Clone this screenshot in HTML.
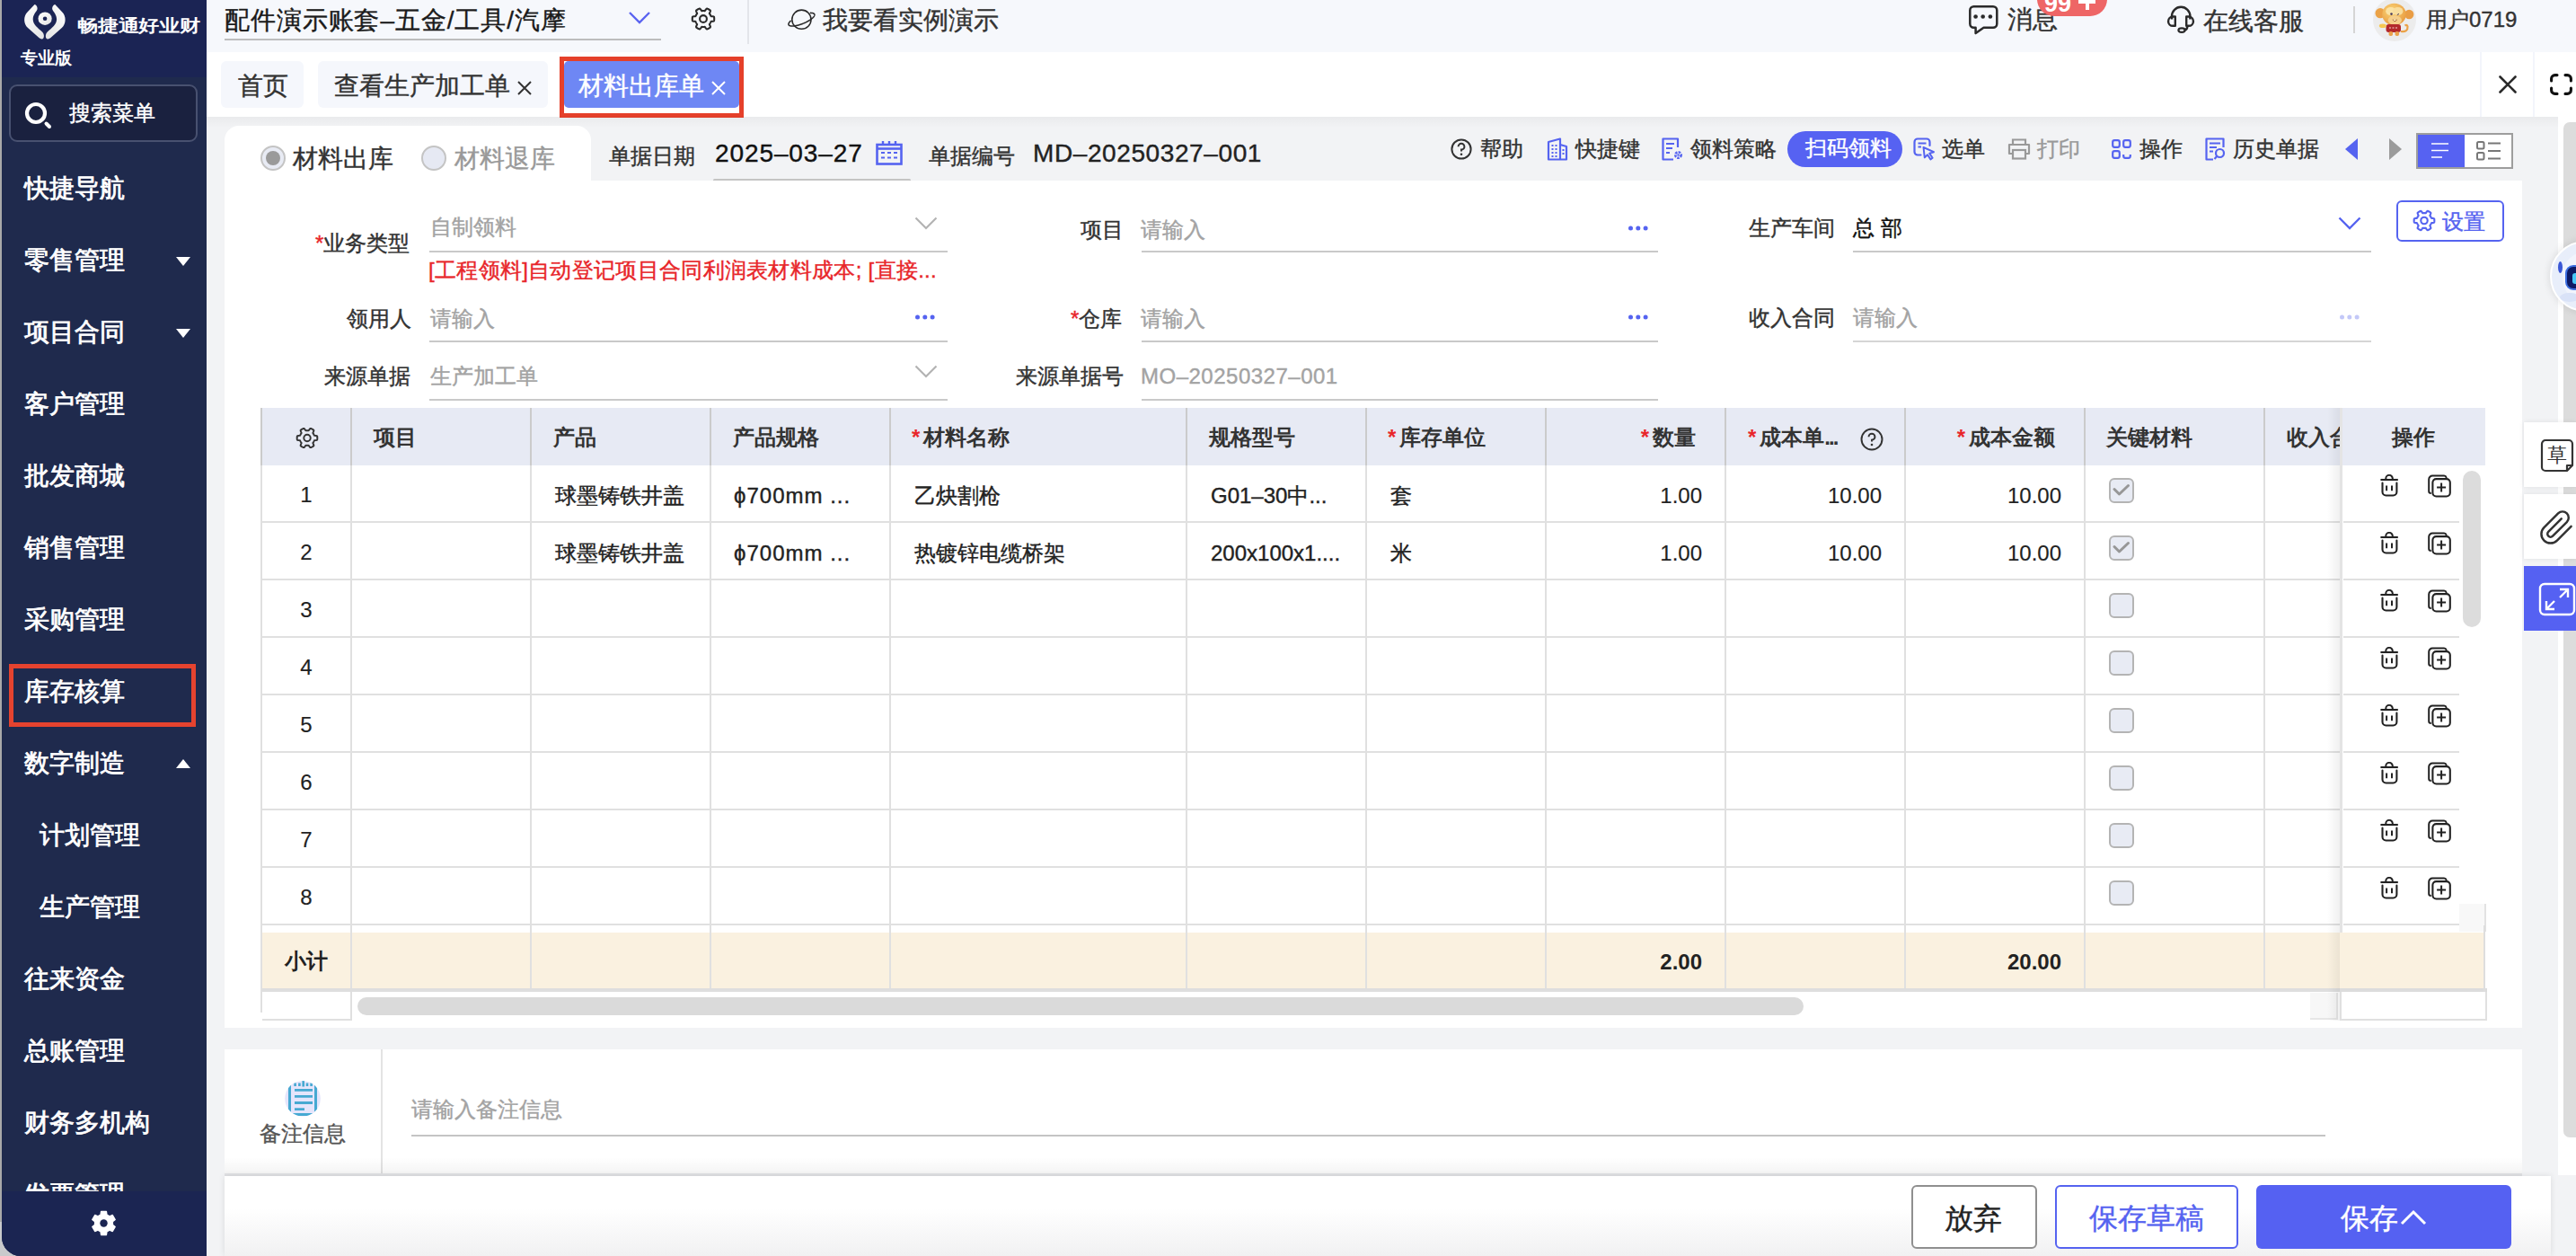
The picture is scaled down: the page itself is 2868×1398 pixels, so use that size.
<!DOCTYPE html>
<html><head><meta charset="utf-8">
<style>
*{box-sizing:border-box;margin:0;padding:0}
html,body{width:2868px;height:1398px;overflow:hidden;background:#f2f3f5;font-family:"Liberation Sans",sans-serif;color:#333}
.t{-webkit-text-stroke-width:0.4px}
.mi{-webkit-text-stroke-width:0.8px}
.a{position:absolute}
.t{position:absolute;white-space:nowrap;line-height:1}
/* sidebar */
#side{position:absolute;left:2px;top:0;width:228px;height:1398px;background:#1f2a4d;border-bottom-left-radius:21px;overflow:hidden}
#logo{position:absolute;left:0;top:0;width:228px;height:86px;background:#1b2454}
.mi{position:absolute;left:25px;color:#fff;font-size:28px;line-height:1;white-space:nowrap}
.tri{position:absolute;left:194px;width:0;height:0;border-left:8px solid transparent;border-right:8px solid transparent}
#topbar{position:absolute;left:230px;top:0;width:2638px;height:58px;background:#f6f8fc}
#tabrow{position:absolute;left:230px;top:58px;width:2638px;height:72px;background:#fff}
.tab{position:absolute;top:68px;height:52px;background:#f5f7fc;border-radius:6px;font-size:28px;color:#333}
</style></head>
<body>
<div class="a" style="left:0;top:0;width:2px;height:1398px;background:#a9a9a9"></div><div class="a" style="left:0;top:1360px;width:40px;height:38px;background:#c9cacc"></div>
<div id="side">
  <div id="logo"></div>
  <div class="t" style="left:84px;top:19px;color:#fff;font-size:23px;font-weight:bold;-webkit-text-stroke-width:0;transform:scaleY(0.82);transform-origin:0 0;letter-spacing:-0.2px">畅捷通好业财</div>
  <div class="t" style="left:21px;top:55px;color:#fff;font-size:19px;font-weight:bold;-webkit-text-stroke-width:0">专业版</div>
  <div class="a" style="left:8px;top:94px;width:210px;height:64px;border:2px solid #485170;border-radius:9px;background:#1a213f"></div>
  <div class="t" style="left:75px;top:114px;color:#fff;font-size:24px">搜索菜单</div>
  <div class="mi" style="top:196px">快捷导航</div>
  <div class="mi" style="top:276px">零售管理</div>
  <div class="mi" style="top:356px">项目合同</div>
  <div class="mi" style="top:436px">客户管理</div>
  <div class="mi" style="top:516px">批发商城</div>
  <div class="mi" style="top:596px">销售管理</div>
  <div class="mi" style="top:676px">采购管理</div>
  <div class="mi" style="top:756px">库存核算</div>
  <div class="mi" style="top:836px">数字制造</div>
  <div class="mi" style="top:916px;left:42px">计划管理</div>
  <div class="mi" style="top:996px;left:42px">生产管理</div>
  <div class="mi" style="top:1076px">往来资金</div>
  <div class="mi" style="top:1156px">总账管理</div>
  <div class="mi" style="top:1236px">财务多机构</div>
  <div class="mi" style="top:1316px">发票管理</div>
  <div class="tri" style="top:286px;border-top:10px solid #fff"></div>
  <div class="tri" style="top:366px;border-top:10px solid #fff"></div>
  <div class="tri" style="top:845px;border-bottom:10px solid #fff"></div>
  <div class="a" style="left:8px;top:739px;width:208px;height:70px;border:5px solid #e5432f"></div>
  <div class="a" style="left:0;top:1326px;width:228px;height:73px;background:#1b2552"></div>
</div>

<div id="topbar">
  <div class="t" style="left:20px;top:9px;font-size:28px;color:#1a1a1a;letter-spacing:0.9px">配件演示账套–五金/工具/汽摩</div>
  <div class="a" style="left:20px;top:43px;width:486px;height:2px;background:#bdbdbd"></div>
  <svg class="a" style="left:469px;top:12px" width="26" height="16" viewBox="0 0 26 16"><path d="M2 2 L13 13 L24 2" fill="none" stroke="#5a63f0" stroke-width="2.4"/></svg>
  <svg class="a" style="left:539px;top:8px" width="28" height="26" viewBox="0 0 28 26"><path d="M14.00 4.00 L14.31 4.01 L14.63 4.02 L14.94 4.05 L15.25 4.09 L15.56 4.14 L15.94 3.89 L16.46 3.14 L17.04 2.39 L17.67 1.70 L18.17 1.54 L18.57 1.69 L18.96 1.85 L19.35 2.03 L19.73 2.23 L20.10 2.43 L20.47 2.65 L20.82 2.89 L21.17 3.13 L21.51 3.39 L21.84 3.65 L21.95 4.17 L21.67 5.06 L21.31 5.94 L20.92 6.77 L20.89 7.21 L21.09 7.46 L21.28 7.71 L21.46 7.97 L21.63 8.23 L21.79 8.50 L21.95 8.77 L22.09 9.05 L22.22 9.34 L22.34 9.63 L22.46 9.92 L22.86 10.12 L23.77 10.20 L24.71 10.33 L25.63 10.53 L26.01 10.88 L26.08 11.30 L26.13 11.72 L26.17 12.15 L26.19 12.57 L26.20 13.00 L26.19 13.43 L26.17 13.85 L26.13 14.28 L26.08 14.70 L26.01 15.12 L25.63 15.47 L24.71 15.67 L23.77 15.80 L22.86 15.88 L22.46 16.08 L22.34 16.37 L22.22 16.66 L22.09 16.95 L21.95 17.23 L21.79 17.50 L21.63 17.77 L21.46 18.03 L21.28 18.29 L21.09 18.54 L20.89 18.79 L20.92 19.23 L21.31 20.06 L21.67 20.94 L21.95 21.83 L21.84 22.35 L21.51 22.61 L21.17 22.87 L20.82 23.11 L20.47 23.35 L20.10 23.57 L19.73 23.77 L19.35 23.97 L18.96 24.15 L18.57 24.31 L18.17 24.46 L17.67 24.30 L17.04 23.61 L16.46 22.86 L15.94 22.11 L15.56 21.86 L15.25 21.91 L14.94 21.95 L14.63 21.98 L14.31 21.99 L14.00 22.00 L13.69 21.99 L13.37 21.98 L13.06 21.95 L12.75 21.91 L12.44 21.86 L12.06 22.11 L11.54 22.86 L10.96 23.61 L10.33 24.30 L9.83 24.46 L9.43 24.31 L9.04 24.15 L8.65 23.97 L8.27 23.77 L7.90 23.57 L7.53 23.35 L7.18 23.11 L6.83 22.87 L6.49 22.61 L6.16 22.35 L6.05 21.83 L6.33 20.94 L6.69 20.06 L7.08 19.23 L7.11 18.79 L6.91 18.54 L6.72 18.29 L6.54 18.03 L6.37 17.77 L6.21 17.50 L6.05 17.23 L5.91 16.95 L5.78 16.66 L5.66 16.37 L5.54 16.08 L5.14 15.88 L4.23 15.80 L3.29 15.67 L2.37 15.47 L1.99 15.12 L1.92 14.70 L1.87 14.28 L1.83 13.85 L1.81 13.43 L1.80 13.00 L1.81 12.57 L1.83 12.15 L1.87 11.72 L1.92 11.30 L1.99 10.88 L2.37 10.53 L3.29 10.33 L4.23 10.20 L5.14 10.12 L5.54 9.92 L5.66 9.63 L5.78 9.34 L5.91 9.05 L6.05 8.77 L6.21 8.50 L6.37 8.23 L6.54 7.97 L6.72 7.71 L6.91 7.46 L7.11 7.21 L7.08 6.77 L6.69 5.94 L6.33 5.06 L6.05 4.17 L6.16 3.65 L6.49 3.39 L6.83 3.13 L7.18 2.89 L7.53 2.65 L7.90 2.43 L8.27 2.23 L8.65 2.03 L9.04 1.85 L9.43 1.69 L9.83 1.54 L10.33 1.70 L10.96 2.39 L11.54 3.14 L12.06 3.89 L12.44 4.14 L12.75 4.09 L13.06 4.05 L13.37 4.02 L13.69 4.01 Z" fill="none" stroke="#2a2a2a" stroke-width="2.1" stroke-linejoin="round"/><circle cx="14" cy="13" r="3.9" fill="none" stroke="#2a2a2a" stroke-width="2.1"/></svg>
  <div class="a" style="left:602px;top:0;width:2px;height:49px;background:#e3e5ea"></div>
  <svg class="a" style="left:647px;top:9px" width="34" height="26" viewBox="0 0 34 26"><circle cx="15.4" cy="12.7" r="10.6" fill="none" stroke="#2a2a2a" stroke-width="1.55"/><path d="M29.77 6.89 L29.85 7.13 L29.88 7.39 L29.88 7.66 L29.83 7.95 L29.75 8.24 L29.62 8.55 L29.46 8.87 L29.26 9.21 L29.02 9.55 L28.75 9.90 L28.43 10.25 L28.08 10.62 L27.70 10.99 L27.28 11.36 L26.83 11.74 L26.35 12.12 L25.84 12.50 L25.30 12.89 L24.74 13.27 L24.14 13.65 L23.53 14.03 L22.89 14.40 L22.23 14.77 L21.55 15.14 L20.86 15.50 L20.15 15.85 L19.42 16.19 L18.69 16.52 L17.95 16.84 L17.20 17.15 L16.44 17.45 L15.69 17.73 L14.93 18.00 L14.17 18.26 L13.42 18.50 L12.67 18.73 L11.93 18.94 L11.20 19.13 L10.48 19.30 L9.77 19.46 L9.08 19.59 L8.41 19.71 L7.75 19.81 L7.12 19.89 L6.51 19.95 L5.92 19.99 L5.36 20.01 L4.83 20.01 L4.33 19.99 L3.85 19.95 L3.41 19.89 L3.00 19.81 L2.63 19.72 L2.29 19.60 L1.98 19.46 L1.72 19.30 L1.49 19.13 L1.30 18.94 L1.14 18.73 L1.03 18.51 M1.03 18.51 L0.95 18.27 L0.92 18.01 L0.92 17.74 L0.97 17.45 L1.05 17.16 L1.18 16.85 L1.34 16.53 L1.54 16.19 L1.78 15.85 L2.05 15.50 L2.37 15.15 L2.72 14.78 L3.10 14.41 M25.44 5.39 L25.97 5.39 L26.47 5.41 L26.95 5.45 L27.39 5.51 L27.80 5.59 L28.17 5.68 L28.51 5.80 L28.82 5.94 L29.08 6.10 L29.31 6.27 L29.50 6.46 L29.66 6.67 L29.77 6.89" fill="none" stroke="#2a2a2a" stroke-width="1.55" stroke-linecap="round"/></svg>
  <div class="t" style="left:686px;top:9px;font-size:28px;color:#333">我要看实例演示</div>

  <svg class="a" style="left:1960px;top:4px" width="36" height="36" viewBox="0 0 36 36"><path d="M9.6 26.8 H7.5 A4.3 4.3 0 0 1 3.3 22.5 V7.5 A4.3 4.3 0 0 1 7.5 3.2 H29 A4.3 4.3 0 0 1 33.3 7.5 V22.5 A4.3 4.3 0 0 1 29 26.8 H18.5 L9.6 33 Z" fill="none" stroke="#2a2a2a" stroke-width="2.5" stroke-linejoin="round"/><circle cx="9.6" cy="14.5" r="2.3" fill="#2a2a2a"/><circle cx="17.7" cy="14.5" r="2.3" fill="#2a2a2a"/><circle cx="25.9" cy="14.5" r="2.3" fill="#2a2a2a"/></svg>
  <div class="t" style="left:2005px;top:8px;font-size:28px;color:#333">消息</div>
  <div class="a" style="left:2038px;top:-20px;width:78px;height:38px;background:#ee6666;border-radius:19px"></div>
  <div class="t" style="left:2046px;top:-9px;font-size:27px;color:#fff;font-weight:bold;-webkit-text-stroke-width:0">99</div><div class="a" style="left:2084px;top:0;width:19px;height:3.5px;background:#fff"></div><div class="a" style="left:2092px;top:-6px;width:3.5px;height:17px;background:#fff"></div>
  <svg class="a" style="left:2180px;top:4px" width="36" height="36" viewBox="0 0 36 36"><path d="M8 17.5 V14 A10.2 10.2 0 0 1 28.4 14 V17.5" fill="none" stroke="#2a2a2a" stroke-width="2.4"/><path d="M11.8 14.5 H9.2 A5.1 5.1 0 0 0 9.2 24.8 H11.8 Z" fill="none" stroke="#2a2a2a" stroke-width="2.4" stroke-linejoin="round"/><path d="M24.2 14.5 H26.8 A5.1 5.1 0 0 1 26.8 24.8 H24.2 Z" fill="none" stroke="#2a2a2a" stroke-width="2.4" stroke-linejoin="round"/><path d="M25.5 25 Q25 29.5 21.5 29.5" fill="none" stroke="#2a2a2a" stroke-width="2.4"/><ellipse cx="19" cy="29.6" rx="3.6" ry="2.3" fill="none" stroke="#2a2a2a" stroke-width="2.2"/></svg>
  <div class="t" style="left:2223px;top:10px;font-size:28px;color:#333">在线客服</div>
  <div class="a" style="left:2390px;top:7px;width:2px;height:30px;background:#d5d5d5"></div>
  <svg class="a" style="left:2412px;top:-2px" width="48" height="48" viewBox="0 0 48 48"><defs><radialGradient id="hg" cx="0.4" cy="0.35" r="0.7"><stop offset="0" stop-color="#fbd77a"/><stop offset="1" stop-color="#e89a3e"/></radialGradient></defs><circle cx="24" cy="24" r="24" fill="#ececec"/><circle cx="8.1" cy="16.7" r="5.6" fill="#eba247"/><circle cx="40.2" cy="18" r="5.2" fill="#e99d45"/><path d="M31 37 Q39 38 38.5 31.5 Q38 29 35.5 30.5" fill="none" stroke="#eba247" stroke-width="2.2"/><ellipse cx="23.5" cy="18" rx="13.3" ry="12.2" fill="url(#hg)"/><ellipse cx="19.8" cy="14.5" rx="5.6" ry="4.6" fill="#fbe3a4"/><ellipse cx="27.8" cy="14.5" rx="5.6" ry="4.6" fill="#f9dd9c"/><ellipse cx="24.3" cy="24.5" rx="7.6" ry="5.2" fill="#f5cf8c"/><circle cx="20.5" cy="17.6" r="1.3" fill="#4a3a5a"/><path d="M26.8 18.6 L29 17.4" stroke="#4a3a5a" stroke-width="1"/><path d="M21.5 23.8 Q24.3 28 27.2 23.8 Z" fill="#9b4f22"/><rect x="22.9" y="23.6" width="2.6" height="1.4" fill="#fff3c8"/><rect x="14.5" y="29" width="16.5" height="9" rx="3" fill="#b3282b"/><ellipse cx="10.8" cy="30.8" rx="4" ry="2.3" fill="#f6c852"/><rect x="17.5" y="37" width="4.6" height="5" rx="2" fill="#eba04a"/><rect x="24.5" y="37" width="4.6" height="5" rx="2" fill="#eba04a"/><path d="M18 33 H20 M21.5 33 H23.5 M25 33 H27" stroke="#f3d3d3" stroke-width="1.2"/></svg>
  <div class="t" style="left:2471px;top:10px;font-size:24px;color:#333">用户0719</div>
</div>
<div id="tabrow">
  <div class="tab" style="left:16px;top:10px;width:92px"><span class="t" style="left:19px;top:14px">首页</span></div>
  <div class="tab" style="left:124px;top:10px;width:256px"><span class="t" style="left:18px;top:14px">查看生产加工单</span>
    <svg class="a" style="left:221px;top:21px" width="18" height="18" viewBox="0 0 18 18"><path d="M2 2 L16 16 M16 2 L2 16" stroke="#333" stroke-width="2"/></svg></div>
  <div class="a" style="left:393px;top:5px;width:205px;height:68px;border:5px solid #e5402a"></div>
  <div class="a" style="left:398px;top:10px;width:195px;height:52px;background:#6e87f4;border-radius:5px"></div>
  <span class="t" style="left:414px;top:24px;font-size:28px;color:#fff">材料出库单</span>
  <svg class="a" style="left:561px;top:31px" width="18" height="18" viewBox="0 0 18 18"><path d="M2 2 L16 16 M16 2 L2 16" stroke="#fff" stroke-width="2"/></svg>
  <div class="a" style="left:2531px;top:0;width:2px;height:72px;background:#f3f5fb"></div>
  <div class="a" style="left:2590px;top:0;width:2px;height:72px;background:#f3f5fb"></div>
  <svg class="a" style="left:2552px;top:26px" width="20" height="20" viewBox="0 0 20 20"><path d="M1.5 1.5 L18.5 18.5 M18.5 1.5 L1.5 18.5" stroke="#2a2a2a" stroke-width="2.6" stroke-linecap="round"/></svg>
  <svg class="a" style="left:2609px;top:24px" width="25" height="24" viewBox="0 0 25 24"><path d="M1.6 8 V5.6 A4 4 0 0 1 5.6 1.6 H8 M17 1.6 H19.4 A4 4 0 0 1 23.4 5.6 V8 M23.4 16 V18.4 A4 4 0 0 1 19.4 22.4 H17 M8 22.4 H5.6 A4 4 0 0 1 1.6 18.4 V16" fill="none" stroke="#111" stroke-width="3.1" stroke-linecap="round"/></svg>
</div>


<!-- content -->
<div class="a" style="left:230px;top:130px;width:2618px;height:12px;background:linear-gradient(to bottom,rgba(0,0,0,0.035),rgba(0,0,0,0))"></div>
<div class="a" style="left:250px;top:140px;width:408px;height:70px;background:#fff;border-radius:16px 16px 0 0"></div>
<div class="a" style="left:290px;top:162px;width:28px;height:28px;border-radius:50%;border:2px solid #c4c4c4;background:#e8ebf4"></div>
<div class="a" style="left:296px;top:168px;width:16px;height:16px;border-radius:50%;background:#9a9a9a"></div>
<div class="t" style="left:326px;top:163px;font-size:28px;color:#333">材料出库</div>
<div class="a" style="left:469px;top:162px;width:28px;height:28px;border-radius:50%;border:2px solid #c4c4c4;background:#e6e9f3"></div>
<div class="t" style="left:506px;top:163px;font-size:28px;color:#999">材料退库</div>
<div class="t" style="left:678px;top:162px;font-size:24px;color:#333">单据日期</div>
<div class="t" style="left:796px;top:157px;font-size:28px;color:#111;letter-spacing:0.9px">2025–03–27</div>
<svg class="a" style="left:975px;top:156px" width="30" height="28" viewBox="0 0 30 28"><rect x="1.5" y="5" width="27" height="21.5" fill="none" stroke="#5563f0" stroke-width="2.6"/><path d="M1.5 9.5 H28.5" stroke="#5563f0" stroke-width="2.6"/><path d="M8 1 V6 M22 1 V6 M15 1 V6" stroke="#5563f0" stroke-width="2.4"/><path d="M6 14 H10 M13 14 H17 M20 14 H24 M6 19.5 H10 M13 19.5 H17 M20 19.5 H24" stroke="#5563f0" stroke-width="2"/></svg>
<div class="a" style="left:794px;top:199px;width:220px;height:3px;background:#c4c4c4;border-radius:2px"></div>
<div class="t" style="left:1034px;top:162px;font-size:24px;color:#333">单据编号</div>
<div class="t" style="left:1150px;top:157px;font-size:28px;color:#222;letter-spacing:0.6px">MD–20250327–001</div>

<!-- toolbar -->
<svg class="a" style="left:1615px;top:154px" width="24" height="24" viewBox="0 0 24 24"><circle cx="12" cy="12" r="10.6" fill="none" stroke="#333" stroke-width="2"/><path d="M8.6 9.3 A3.4 3.4 0 1 1 12 12.6 V14.6" fill="none" stroke="#333" stroke-width="2"/><circle cx="12" cy="17.8" r="1.3" fill="#333"/></svg>
<div class="t" style="left:1648px;top:154px;font-size:24px;color:#333">帮助</div>
<svg class="a" style="left:1722px;top:153px" width="24" height="26" viewBox="0 0 24 26"><path d="M2 5 L15 1.5 V24.5 H2 Z M15 8 L22 10 V24.5 H15" fill="none" stroke="#5563f0" stroke-width="2.2" stroke-linejoin="round"/><path d="M5.5 9 H7.5 M9.5 9 H11.5 M5.5 13 H7.5 M9.5 13 H11.5 M5.5 17 H7.5 M9.5 17 H11.5 M5.5 21 H7.5 M9.5 21 H11.5 M17.5 14 H19.5 M17.5 18 H19.5" stroke="#5563f0" stroke-width="2"/></svg>
<div class="t" style="left:1754px;top:154px;font-size:24px;color:#333">快捷键</div>
<svg class="a" style="left:1849px;top:153px" width="26" height="26" viewBox="0 0 26 26"><path d="M14 24.5 H2.5 V1.5 H19 V11" fill="none" stroke="#5563f0" stroke-width="2.2" stroke-linejoin="round"/><path d="M6 7 H15 M6 12 H13 M6 17 H10" stroke="#5563f0" stroke-width="2"/><circle cx="19.5" cy="19.5" r="3.2" fill="none" stroke="#5563f0" stroke-width="2.6" stroke-dasharray="2.5 1.2"/><circle cx="19.5" cy="19.5" r="1.2" fill="#5563f0"/></svg>
<div class="t" style="left:1882px;top:154px;font-size:24px;color:#333">领料策略</div>
<div class="a" style="left:1990px;top:146px;width:128px;height:40px;border-radius:20px;background:#5662f2"></div>
<div class="t" style="left:2010px;top:153px;font-size:24px;color:#fff">扫码领料</div>
<svg class="a" style="left:2129px;top:153px" width="26" height="26" viewBox="0 0 26 26"><path d="M9.5 19.5 H6 A3.5 3.5 0 0 1 2.5 16 V5 A3.5 3.5 0 0 1 6 1.5 H16 A3.5 3.5 0 0 1 19.5 5 V9" fill="none" stroke="#5563f0" stroke-width="2.2" stroke-linecap="round"/><path d="M6.5 6.5 H15.5 M6.5 10.5 H10" stroke="#5563f0" stroke-width="2"/><path d="M12.5 11 L24 16.2 L19.2 17.6 L22.6 22.8 L20.4 24.4 L17 19.2 L13.8 22.4 Z" fill="none" stroke="#5563f0" stroke-width="2" stroke-linejoin="round"/></svg>
<div class="t" style="left:2162px;top:154px;font-size:24px;color:#333">选单</div>
<svg class="a" style="left:2235px;top:154px" width="26" height="24" viewBox="0 0 26 24"><path d="M6 7 V1.5 H20 V7" fill="none" stroke="#999" stroke-width="2.2"/><path d="M6 17 H2 V7 H24 V17 H20" fill="none" stroke="#999" stroke-width="2.2" stroke-linejoin="round"/><rect x="6" y="13" width="14" height="9.5" fill="none" stroke="#999" stroke-width="2.2"/></svg>
<div class="t" style="left:2268px;top:154px;font-size:24px;color:#999">打印</div>
<svg class="a" style="left:2351px;top:155px" width="22" height="22" viewBox="0 0 22 22"><rect x="1.2" y="1.2" width="7.6" height="7.6" rx="2" fill="none" stroke="#5563f0" stroke-width="2.2"/><rect x="13.2" y="1.2" width="7.6" height="7.6" rx="2" fill="none" stroke="#5563f0" stroke-width="2.2"/><rect x="1.2" y="13.2" width="7.6" height="7.6" rx="2" fill="none" stroke="#5563f0" stroke-width="2.2"/><path d="M13.2 17 V18.8 A2 2 0 0 0 15.2 20.8 H18.8 A2 2 0 0 0 20.8 18.8 V17" fill="none" stroke="#5563f0" stroke-width="2.2"/></svg>
<div class="t" style="left:2382px;top:154px;font-size:24px;color:#333">操作</div>
<svg class="a" style="left:2455px;top:153px" width="24" height="26" viewBox="0 0 24 26"><path d="M9 24.5 H1.5 V1.5 H20.5 V11" fill="none" stroke="#5563f0" stroke-width="2.2" stroke-linejoin="round"/><path d="M5 6.5 H17 M5 11 H13 M5 15.5 H9" stroke="#5563f0" stroke-width="2"/><circle cx="16.5" cy="17.5" r="4.5" fill="none" stroke="#5563f0" stroke-width="2.2"/><path d="M13.3 20.8 L10.5 24" stroke="#5563f0" stroke-width="2.2"/></svg>
<div class="t" style="left:2486px;top:154px;font-size:24px;color:#333">历史单据</div>
<svg class="a" style="left:2611px;top:154px" width="15" height="24" viewBox="0 0 15 24"><path d="M14 0 V24 L0 12 Z" fill="#5563f0"/></svg>
<svg class="a" style="left:2659px;top:154px" width="15" height="24" viewBox="0 0 15 24"><path d="M1 0 V24 L15 12 Z" fill="#9b9b9b"/></svg>
<div class="a" style="left:2690px;top:148px;width:108px;height:40px;border:2px solid #9d9d9d;background:#fff"></div>
<div class="a" style="left:2692px;top:150px;width:52px;height:36px;background:#5662f2"></div>
<svg class="a" style="left:2707px;top:158px" width="20" height="20" viewBox="0 0 20 20"><path d="M0 2 H19 M0 9.5 H19 M0 17 H12" stroke="#fff" stroke-width="1.7"/></svg>
<svg class="a" style="left:2757px;top:157px" width="28" height="22" viewBox="0 0 28 22"><rect x="1" y="1" width="7.5" height="7.5" rx="1.5" fill="none" stroke="#777" stroke-width="2"/><rect x="1" y="13" width="7.5" height="7.5" rx="1.5" fill="none" stroke="#777" stroke-width="2"/><path d="M13 2.5 H27 M13 11 H27 M13 19.5 H27" stroke="#777" stroke-width="2"/></svg>

<!-- card -->
<div class="a" style="left:250px;top:201px;width:2558px;height:943px;background:#fff"></div>

<!-- form -->
<div class="t" style="left:351px;top:259px;font-size:24px;color:#333"><span style="color:#e8262a">*</span>业务类型</div>
<div class="t" style="left:479px;top:241px;font-size:24px;color:#a3a3a3">自制领料</div>
<svg class="a" style="left:1018px;top:241px" width="26" height="16" viewBox="0 0 26 16"><path d="M1.5 1.5 L13 13 L24.5 1.5" fill="none" stroke="#b3b3b3" stroke-width="2.2"/></svg>
<div class="a" style="left:478px;top:279px;width:577px;height:2px;background:#c9c9c9"></div>
<div class="t" style="left:477px;top:289px;font-size:24px;color:#e8262a;letter-spacing:0.3px">[工程领料]自动登记项目合同利润表材料成本; [直接...</div>

<div class="t" style="left:1203px;top:244px;font-size:24px;color:#333">项目</div>
<div class="t" style="left:1270px;top:244px;font-size:24px;color:#a3a3a3">请输入</div>
<svg class="a" style="left:1812px;top:250px" width="24" height="8" viewBox="0 0 24 8"><circle cx="3.5" cy="4" r="2.5" fill="#5563f0"/><circle cx="11.8" cy="4" r="2.5" fill="#5563f0"/><circle cx="20.1" cy="4" r="2.5" fill="#5563f0"/></svg>
<div class="a" style="left:1271px;top:279px;width:575px;height:2px;background:#c9c9c9"></div>

<div class="t" style="left:1947px;top:242px;font-size:24px;color:#333">生产车间</div>
<div class="t" style="left:2063px;top:242px;font-size:24px;color:#111">总 部</div>
<svg class="a" style="left:2603px;top:241px" width="26" height="16" viewBox="0 0 26 16"><path d="M1.5 1.5 L13 13 L24.5 1.5" fill="none" stroke="#5563f0" stroke-width="2.4"/></svg>
<div class="a" style="left:2063px;top:279px;width:577px;height:2px;background:#c9c9c9"></div>
<div class="a" style="left:2668px;top:223px;width:120px;height:46px;border:2px solid #5563f0;border-radius:6px;background:#fff"></div>
<svg class="a" style="left:2686px;top:233px" width="26" height="25" viewBox="0 0 28 26"><path d="M14.00 4.00 L14.31 4.01 L14.63 4.02 L14.94 4.05 L15.25 4.09 L15.56 4.14 L15.94 3.89 L16.46 3.14 L17.04 2.39 L17.67 1.70 L18.17 1.54 L18.57 1.69 L18.96 1.85 L19.35 2.03 L19.73 2.23 L20.10 2.43 L20.47 2.65 L20.82 2.89 L21.17 3.13 L21.51 3.39 L21.84 3.65 L21.95 4.17 L21.67 5.06 L21.31 5.94 L20.92 6.77 L20.89 7.21 L21.09 7.46 L21.28 7.71 L21.46 7.97 L21.63 8.23 L21.79 8.50 L21.95 8.77 L22.09 9.05 L22.22 9.34 L22.34 9.63 L22.46 9.92 L22.86 10.12 L23.77 10.20 L24.71 10.33 L25.63 10.53 L26.01 10.88 L26.08 11.30 L26.13 11.72 L26.17 12.15 L26.19 12.57 L26.20 13.00 L26.19 13.43 L26.17 13.85 L26.13 14.28 L26.08 14.70 L26.01 15.12 L25.63 15.47 L24.71 15.67 L23.77 15.80 L22.86 15.88 L22.46 16.08 L22.34 16.37 L22.22 16.66 L22.09 16.95 L21.95 17.23 L21.79 17.50 L21.63 17.77 L21.46 18.03 L21.28 18.29 L21.09 18.54 L20.89 18.79 L20.92 19.23 L21.31 20.06 L21.67 20.94 L21.95 21.83 L21.84 22.35 L21.51 22.61 L21.17 22.87 L20.82 23.11 L20.47 23.35 L20.10 23.57 L19.73 23.77 L19.35 23.97 L18.96 24.15 L18.57 24.31 L18.17 24.46 L17.67 24.30 L17.04 23.61 L16.46 22.86 L15.94 22.11 L15.56 21.86 L15.25 21.91 L14.94 21.95 L14.63 21.98 L14.31 21.99 L14.00 22.00 L13.69 21.99 L13.37 21.98 L13.06 21.95 L12.75 21.91 L12.44 21.86 L12.06 22.11 L11.54 22.86 L10.96 23.61 L10.33 24.30 L9.83 24.46 L9.43 24.31 L9.04 24.15 L8.65 23.97 L8.27 23.77 L7.90 23.57 L7.53 23.35 L7.18 23.11 L6.83 22.87 L6.49 22.61 L6.16 22.35 L6.05 21.83 L6.33 20.94 L6.69 20.06 L7.08 19.23 L7.11 18.79 L6.91 18.54 L6.72 18.29 L6.54 18.03 L6.37 17.77 L6.21 17.50 L6.05 17.23 L5.91 16.95 L5.78 16.66 L5.66 16.37 L5.54 16.08 L5.14 15.88 L4.23 15.80 L3.29 15.67 L2.37 15.47 L1.99 15.12 L1.92 14.70 L1.87 14.28 L1.83 13.85 L1.81 13.43 L1.80 13.00 L1.81 12.57 L1.83 12.15 L1.87 11.72 L1.92 11.30 L1.99 10.88 L2.37 10.53 L3.29 10.33 L4.23 10.20 L5.14 10.12 L5.54 9.92 L5.66 9.63 L5.78 9.34 L5.91 9.05 L6.05 8.77 L6.21 8.50 L6.37 8.23 L6.54 7.97 L6.72 7.71 L6.91 7.46 L7.11 7.21 L7.08 6.77 L6.69 5.94 L6.33 5.06 L6.05 4.17 L6.16 3.65 L6.49 3.39 L6.83 3.13 L7.18 2.89 L7.53 2.65 L7.90 2.43 L8.27 2.23 L8.65 2.03 L9.04 1.85 L9.43 1.69 L9.83 1.54 L10.33 1.70 L10.96 2.39 L11.54 3.14 L12.06 3.89 L12.44 4.14 L12.75 4.09 L13.06 4.05 L13.37 4.02 L13.69 4.01 Z" fill="none" stroke="#5563f0" stroke-width="2.3" stroke-linejoin="round"/><circle cx="14" cy="13" r="4" fill="none" stroke="#5563f0" stroke-width="2.3"/></svg>
<div class="t" style="left:2719px;top:235px;font-size:24px;color:#5563f0">设置</div>

<div class="t" style="left:386px;top:343px;font-size:24px;color:#333">领用人</div>
<div class="t" style="left:479px;top:343px;font-size:24px;color:#a3a3a3">请输入</div>
<svg class="a" style="left:1018px;top:349px" width="24" height="8" viewBox="0 0 24 8"><circle cx="3.5" cy="4" r="2.5" fill="#5563f0"/><circle cx="11.8" cy="4" r="2.5" fill="#5563f0"/><circle cx="20.1" cy="4" r="2.5" fill="#5563f0"/></svg>
<div class="a" style="left:478px;top:379px;width:577px;height:2px;background:#c9c9c9"></div>

<div class="t" style="left:1192px;top:343px;font-size:24px;color:#333"><span style="color:#e8262a">*</span>仓库</div>
<div class="t" style="left:1270px;top:343px;font-size:24px;color:#a3a3a3">请输入</div>
<svg class="a" style="left:1812px;top:349px" width="24" height="8" viewBox="0 0 24 8"><circle cx="3.5" cy="4" r="2.5" fill="#5563f0"/><circle cx="11.8" cy="4" r="2.5" fill="#5563f0"/><circle cx="20.1" cy="4" r="2.5" fill="#5563f0"/></svg>
<div class="a" style="left:1271px;top:379px;width:575px;height:2px;background:#c9c9c9"></div>

<div class="t" style="left:1947px;top:342px;font-size:24px;color:#333">收入合同</div>
<div class="t" style="left:2063px;top:342px;font-size:24px;color:#a3a3a3">请输入</div>
<svg class="a" style="left:2604px;top:349px" width="24" height="8" viewBox="0 0 24 8"><circle cx="3.5" cy="4" r="2.5" fill="#c3c8f8"/><circle cx="11.8" cy="4" r="2.5" fill="#c3c8f8"/><circle cx="20.1" cy="4" r="2.5" fill="#c3c8f8"/></svg>
<div class="a" style="left:2063px;top:379px;width:577px;height:2px;background:#d5d5d5"></div>

<div class="t" style="left:361px;top:407px;font-size:24px;color:#333">来源单据</div>
<div class="t" style="left:479px;top:407px;font-size:24px;color:#a3a3a3">生产加工单</div>
<svg class="a" style="left:1018px;top:406px" width="26" height="16" viewBox="0 0 26 16"><path d="M1.5 1.5 L13 13 L24.5 1.5" fill="none" stroke="#b3b3b3" stroke-width="2.2"/></svg>
<div class="a" style="left:478px;top:444px;width:577px;height:2px;background:#c9c9c9"></div>
<div class="t" style="left:1131px;top:407px;font-size:24px;color:#333">来源单据号</div>
<div class="t" style="left:1270px;top:407px;font-size:24px;color:#a3a3a3;letter-spacing:0.5px">MO–20250327–001</div>
<div class="a" style="left:1271px;top:444px;width:575px;height:2px;background:#c9c9c9"></div>
<!--TABLE-->
<div class="a" style="left:290px;top:454px;width:2315px;height:64px;background:#e7eaf4"></div>
<div class="a" style="left:292px;top:580px;width:2313px;height:2px;background:#e0e0e0"></div>
<div class="a" style="left:292px;top:644px;width:2313px;height:2px;background:#e0e0e0"></div>
<div class="a" style="left:292px;top:708px;width:2313px;height:2px;background:#e0e0e0"></div>
<div class="a" style="left:292px;top:772px;width:2313px;height:2px;background:#e0e0e0"></div>
<div class="a" style="left:292px;top:836px;width:2313px;height:2px;background:#e0e0e0"></div>
<div class="a" style="left:292px;top:900px;width:2313px;height:2px;background:#e0e0e0"></div>
<div class="a" style="left:292px;top:964px;width:2313px;height:2px;background:#e0e0e0"></div>
<div class="a" style="left:292px;top:1028px;width:2313px;height:2px;background:#e0e0e0"></div>
<div class="a" style="left:292px;top:1038px;width:2313px;height:62px;background:#faf1e0"></div>
<div class="a" style="left:290px;top:1100px;width:2315px;height:4px;background:#dedede"></div>
<div class="a" style="left:290px;top:454px;width:2px;height:64px;background:#cbcbcb"></div>
<div class="a" style="left:290px;top:518px;width:2px;height:609px;background:#e0e0e0"></div>
<div class="a" style="left:390px;top:454px;width:2px;height:64px;background:#cbcbcb"></div>
<div class="a" style="left:390px;top:518px;width:2px;height:582px;background:#e0e0e0"></div>
<div class="a" style="left:590px;top:454px;width:2px;height:64px;background:#cbcbcb"></div>
<div class="a" style="left:590px;top:518px;width:2px;height:582px;background:#e0e0e0"></div>
<div class="a" style="left:790px;top:454px;width:2px;height:64px;background:#cbcbcb"></div>
<div class="a" style="left:790px;top:518px;width:2px;height:582px;background:#e0e0e0"></div>
<div class="a" style="left:990px;top:454px;width:2px;height:64px;background:#cbcbcb"></div>
<div class="a" style="left:990px;top:518px;width:2px;height:582px;background:#e0e0e0"></div>
<div class="a" style="left:1320px;top:454px;width:2px;height:64px;background:#cbcbcb"></div>
<div class="a" style="left:1320px;top:518px;width:2px;height:582px;background:#e0e0e0"></div>
<div class="a" style="left:1520px;top:454px;width:2px;height:64px;background:#cbcbcb"></div>
<div class="a" style="left:1520px;top:518px;width:2px;height:582px;background:#e0e0e0"></div>
<div class="a" style="left:1720px;top:454px;width:2px;height:64px;background:#cbcbcb"></div>
<div class="a" style="left:1720px;top:518px;width:2px;height:582px;background:#e0e0e0"></div>
<div class="a" style="left:1920px;top:454px;width:2px;height:64px;background:#cbcbcb"></div>
<div class="a" style="left:1920px;top:518px;width:2px;height:582px;background:#e0e0e0"></div>
<div class="a" style="left:2120px;top:454px;width:2px;height:64px;background:#cbcbcb"></div>
<div class="a" style="left:2120px;top:518px;width:2px;height:582px;background:#e0e0e0"></div>
<div class="a" style="left:2320px;top:454px;width:2px;height:64px;background:#cbcbcb"></div>
<div class="a" style="left:2320px;top:518px;width:2px;height:582px;background:#e0e0e0"></div>
<div class="a" style="left:2520px;top:454px;width:2px;height:64px;background:#cbcbcb"></div>
<div class="a" style="left:2520px;top:518px;width:2px;height:582px;background:#e0e0e0"></div>
<div class="a" style="left:390px;top:1104px;width:2px;height:32px;background:#e0e0e0"></div>
<div class="a" style="left:292px;top:1134px;width:100px;height:2px;background:#e0e0e0"></div>
<div class="a" style="left:398px;top:1110px;width:1610px;height:20px;border-radius:10px;background:#dadada"></div>
<div class="a" style="left:2572px;top:1105px;width:31px;height:30px;background:#f7f7f7;border-right:2px solid #e6e6e6;border-bottom:2px solid #e6e6e6"></div>
<svg class="a" style="left:329px;top:475px" width="26" height="25" viewBox="0 0 28 26"><path d="M14.00 4.00 L14.31 4.01 L14.63 4.02 L14.94 4.05 L15.25 4.09 L15.56 4.14 L15.94 3.89 L16.46 3.14 L17.04 2.39 L17.67 1.70 L18.17 1.54 L18.57 1.69 L18.96 1.85 L19.35 2.03 L19.73 2.23 L20.10 2.43 L20.47 2.65 L20.82 2.89 L21.17 3.13 L21.51 3.39 L21.84 3.65 L21.95 4.17 L21.67 5.06 L21.31 5.94 L20.92 6.77 L20.89 7.21 L21.09 7.46 L21.28 7.71 L21.46 7.97 L21.63 8.23 L21.79 8.50 L21.95 8.77 L22.09 9.05 L22.22 9.34 L22.34 9.63 L22.46 9.92 L22.86 10.12 L23.77 10.20 L24.71 10.33 L25.63 10.53 L26.01 10.88 L26.08 11.30 L26.13 11.72 L26.17 12.15 L26.19 12.57 L26.20 13.00 L26.19 13.43 L26.17 13.85 L26.13 14.28 L26.08 14.70 L26.01 15.12 L25.63 15.47 L24.71 15.67 L23.77 15.80 L22.86 15.88 L22.46 16.08 L22.34 16.37 L22.22 16.66 L22.09 16.95 L21.95 17.23 L21.79 17.50 L21.63 17.77 L21.46 18.03 L21.28 18.29 L21.09 18.54 L20.89 18.79 L20.92 19.23 L21.31 20.06 L21.67 20.94 L21.95 21.83 L21.84 22.35 L21.51 22.61 L21.17 22.87 L20.82 23.11 L20.47 23.35 L20.10 23.57 L19.73 23.77 L19.35 23.97 L18.96 24.15 L18.57 24.31 L18.17 24.46 L17.67 24.30 L17.04 23.61 L16.46 22.86 L15.94 22.11 L15.56 21.86 L15.25 21.91 L14.94 21.95 L14.63 21.98 L14.31 21.99 L14.00 22.00 L13.69 21.99 L13.37 21.98 L13.06 21.95 L12.75 21.91 L12.44 21.86 L12.06 22.11 L11.54 22.86 L10.96 23.61 L10.33 24.30 L9.83 24.46 L9.43 24.31 L9.04 24.15 L8.65 23.97 L8.27 23.77 L7.90 23.57 L7.53 23.35 L7.18 23.11 L6.83 22.87 L6.49 22.61 L6.16 22.35 L6.05 21.83 L6.33 20.94 L6.69 20.06 L7.08 19.23 L7.11 18.79 L6.91 18.54 L6.72 18.29 L6.54 18.03 L6.37 17.77 L6.21 17.50 L6.05 17.23 L5.91 16.95 L5.78 16.66 L5.66 16.37 L5.54 16.08 L5.14 15.88 L4.23 15.80 L3.29 15.67 L2.37 15.47 L1.99 15.12 L1.92 14.70 L1.87 14.28 L1.83 13.85 L1.81 13.43 L1.80 13.00 L1.81 12.57 L1.83 12.15 L1.87 11.72 L1.92 11.30 L1.99 10.88 L2.37 10.53 L3.29 10.33 L4.23 10.20 L5.14 10.12 L5.54 9.92 L5.66 9.63 L5.78 9.34 L5.91 9.05 L6.05 8.77 L6.21 8.50 L6.37 8.23 L6.54 7.97 L6.72 7.71 L6.91 7.46 L7.11 7.21 L7.08 6.77 L6.69 5.94 L6.33 5.06 L6.05 4.17 L6.16 3.65 L6.49 3.39 L6.83 3.13 L7.18 2.89 L7.53 2.65 L7.90 2.43 L8.27 2.23 L8.65 2.03 L9.04 1.85 L9.43 1.69 L9.83 1.54 L10.33 1.70 L10.96 2.39 L11.54 3.14 L12.06 3.89 L12.44 4.14 L12.75 4.09 L13.06 4.05 L13.37 4.02 L13.69 4.01 Z" fill="none" stroke="#333" stroke-width="2.1" stroke-linejoin="round"/><circle cx="14" cy="13" r="4" fill="none" stroke="#333" stroke-width="2.1"/></svg>
<div class="t" style="left:416px;top:475px;font-size:24px;color:#333;font-weight:bold;-webkit-text-stroke-width:0;">项目</div>
<div class="t" style="left:616px;top:475px;font-size:24px;color:#333;font-weight:bold;-webkit-text-stroke-width:0;">产品</div>
<div class="t" style="left:816px;top:475px;font-size:24px;color:#333;font-weight:bold;-webkit-text-stroke-width:0;">产品规格</div>
<div class="t" style="left:1015px;top:475px;font-size:24px;color:#333;font-weight:bold;-webkit-text-stroke-width:0;"><span style="color:#e8262a;margin-right:4px">*</span>材料名称</div>
<div class="t" style="left:1346px;top:475px;font-size:24px;color:#333;font-weight:bold;-webkit-text-stroke-width:0;">规格型号</div>
<div class="t" style="left:1545px;top:475px;font-size:24px;color:#333;font-weight:bold;-webkit-text-stroke-width:0;"><span style="color:#e8262a;margin-right:4px">*</span>库存单位</div>
<div class="t" style="right:980px;top:475px;font-size:24px;color:#333;font-weight:bold;-webkit-text-stroke-width:0;"><span style="color:#e8262a;margin-right:4px">*</span>数量</div>
<div class="t" style="left:1946px;top:475px;font-size:24px;color:#333;font-weight:bold;-webkit-text-stroke-width:0;"><span style="color:#e8262a;margin-right:4px">*</span>成本单<span style="letter-spacing:-2px">...</span></div>
<svg class="a" style="left:2071px;top:476px" width="26" height="26" viewBox="0 0 24 24"><circle cx="12" cy="12" r="10.6" fill="none" stroke="#333" stroke-width="1.8"/><path d="M8.8 9.4 A3.2 3.2 0 1 1 12 12.6 V14.4" fill="none" stroke="#333" stroke-width="1.8"/><circle cx="12" cy="17.6" r="1.2" fill="#333"/></svg>
<div class="t" style="right:580px;top:475px;font-size:24px;color:#333;font-weight:bold;-webkit-text-stroke-width:0;"><span style="color:#e8262a;margin-right:4px">*</span>成本金额</div>
<div class="t" style="left:2345px;top:475px;font-size:24px;color:#333;font-weight:bold;-webkit-text-stroke-width:0;">关键材料</div>
<div class="t" style="left:2546px;top:475px;font-size:24px;color:#333;font-weight:bold;-webkit-text-stroke-width:0;">收入合同</div>
<div class="t" style="left:241px;width:200px;text-align:center;top:539px;font-size:24px;color:#222;-webkit-text-stroke-width:0.15px">1</div>
<div class="a" style="left:2348px;top:532px;width:28px;height:28px;border:2px solid #b4b4b4;border-radius:6px;background:#e8ebf4"></div>
<svg class="a" style="left:2351px;top:538px" width="22" height="16" viewBox="0 0 22 16"><path d="M3 6.5 L8.5 12 L18.5 2.5" fill="none" stroke="#979797" stroke-width="3" stroke-linecap="round" stroke-linejoin="round"/></svg>
<div class="t" style="left:241px;width:200px;text-align:center;top:603px;font-size:24px;color:#222;-webkit-text-stroke-width:0.15px">2</div>
<div class="a" style="left:2348px;top:596px;width:28px;height:28px;border:2px solid #b4b4b4;border-radius:6px;background:#e8ebf4"></div>
<svg class="a" style="left:2351px;top:602px" width="22" height="16" viewBox="0 0 22 16"><path d="M3 6.5 L8.5 12 L18.5 2.5" fill="none" stroke="#979797" stroke-width="3" stroke-linecap="round" stroke-linejoin="round"/></svg>
<div class="t" style="left:241px;width:200px;text-align:center;top:667px;font-size:24px;color:#222;-webkit-text-stroke-width:0.15px">3</div>
<div class="a" style="left:2348px;top:660px;width:28px;height:28px;border:2px solid #b4b4b4;border-radius:6px;background:#e8ebf4"></div>
<div class="t" style="left:241px;width:200px;text-align:center;top:731px;font-size:24px;color:#222;-webkit-text-stroke-width:0.15px">4</div>
<div class="a" style="left:2348px;top:724px;width:28px;height:28px;border:2px solid #b4b4b4;border-radius:6px;background:#e8ebf4"></div>
<div class="t" style="left:241px;width:200px;text-align:center;top:795px;font-size:24px;color:#222;-webkit-text-stroke-width:0.15px">5</div>
<div class="a" style="left:2348px;top:788px;width:28px;height:28px;border:2px solid #b4b4b4;border-radius:6px;background:#e8ebf4"></div>
<div class="t" style="left:241px;width:200px;text-align:center;top:859px;font-size:24px;color:#222;-webkit-text-stroke-width:0.15px">6</div>
<div class="a" style="left:2348px;top:852px;width:28px;height:28px;border:2px solid #b4b4b4;border-radius:6px;background:#e8ebf4"></div>
<div class="t" style="left:241px;width:200px;text-align:center;top:923px;font-size:24px;color:#222;-webkit-text-stroke-width:0.15px">7</div>
<div class="a" style="left:2348px;top:916px;width:28px;height:28px;border:2px solid #b4b4b4;border-radius:6px;background:#e8ebf4"></div>
<div class="t" style="left:241px;width:200px;text-align:center;top:987px;font-size:24px;color:#222;-webkit-text-stroke-width:0.15px">8</div>
<div class="a" style="left:2348px;top:980px;width:28px;height:28px;border:2px solid #b4b4b4;border-radius:6px;background:#e8ebf4"></div>
<div class="t" style="left:618px;top:540px;font-size:24px;color:#222;">球墨铸铁井盖</div>
<div class="t" style="left:817px;top:540px;font-size:24px;color:#222;"><span style="letter-spacing:1px">ϕ700mm ...</span></div>
<div class="t" style="left:1018px;top:540px;font-size:24px;color:#222;">乙炔割枪</div>
<div class="t" style="left:1348px;top:540px;font-size:24px;color:#222;">G01–30中...</div>
<div class="t" style="left:1548px;top:540px;font-size:24px;color:#222;">套</div>
<div class="t" style="right:973px;top:540px;font-size:24px;color:#222;-webkit-text-stroke-width:0.15px">1.00</div>
<div class="t" style="right:773px;top:540px;font-size:24px;color:#222;-webkit-text-stroke-width:0.15px">10.00</div>
<div class="t" style="right:573px;top:540px;font-size:24px;color:#222;-webkit-text-stroke-width:0.15px">10.00</div>
<div class="t" style="left:618px;top:604px;font-size:24px;color:#222;">球墨铸铁井盖</div>
<div class="t" style="left:817px;top:604px;font-size:24px;color:#222;"><span style="letter-spacing:1px">ϕ700mm ...</span></div>
<div class="t" style="left:1018px;top:604px;font-size:24px;color:#222;">热镀锌电缆桥架</div>
<div class="t" style="left:1348px;top:604px;font-size:24px;color:#222;">200x100x1....</div>
<div class="t" style="left:1548px;top:604px;font-size:24px;color:#222;">米</div>
<div class="t" style="right:973px;top:604px;font-size:24px;color:#222;-webkit-text-stroke-width:0.15px">1.00</div>
<div class="t" style="right:773px;top:604px;font-size:24px;color:#222;-webkit-text-stroke-width:0.15px">10.00</div>
<div class="t" style="right:573px;top:604px;font-size:24px;color:#222;-webkit-text-stroke-width:0.15px">10.00</div>
<div class="t" style="left:241px;width:200px;text-align:center;top:1058px;font-size:24px;color:#222;font-weight:bold;-webkit-text-stroke-width:0;">小计</div>
<div class="t" style="right:973px;top:1059px;font-size:24px;color:#222;font-weight:bold;-webkit-text-stroke-width:0;">2.00</div>
<div class="t" style="right:573px;top:1059px;font-size:24px;color:#222;font-weight:bold;-webkit-text-stroke-width:0;">20.00</div>
<div class="a" style="left:2591px;top:454px;width:14px;height:682px;background:linear-gradient(to right,rgba(0,0,0,0),rgba(0,0,0,0.06))"></div>
<div class="a" style="left:2605px;top:454px;width:162px;height:682px;background:#fff"></div>
<div class="a" style="left:2605px;top:454px;width:162px;height:64px;background:#e7eaf4"></div>
<div class="a" style="left:2605px;top:454px;width:3px;height:682px;background:#e4e4e4"></div>
<div class="t" style="left:2587px;width:200px;text-align:center;top:475px;font-size:24px;color:#333;font-weight:bold;-webkit-text-stroke-width:0;">操作</div>
<div class="a" style="left:2609px;top:580px;width:129px;height:2px;background:#e0e0e0"></div>
<div class="a" style="left:2609px;top:644px;width:129px;height:2px;background:#e0e0e0"></div>
<div class="a" style="left:2609px;top:708px;width:129px;height:2px;background:#e0e0e0"></div>
<div class="a" style="left:2609px;top:772px;width:129px;height:2px;background:#e0e0e0"></div>
<div class="a" style="left:2609px;top:836px;width:129px;height:2px;background:#e0e0e0"></div>
<div class="a" style="left:2609px;top:900px;width:129px;height:2px;background:#e0e0e0"></div>
<div class="a" style="left:2609px;top:964px;width:129px;height:2px;background:#e0e0e0"></div>
<div class="a" style="left:2609px;top:1028px;width:129px;height:2px;background:#e0e0e0"></div>
<svg class="a" style="left:2649px;top:528px" width="22" height="25" viewBox="0 0 22 25"><path d="M1.4 6 H20.8" stroke="#222" stroke-width="2.1"/><path d="M7.3 6 V4.6 A3.75 3.75 0 0 1 14.8 4.6 V6" fill="none" stroke="#222" stroke-width="2"/><path d="M3.5 9.5 V19.5 A4 4 0 0 0 7.5 23.5 H15.4 A4 4 0 0 0 19.4 19.5 V9.5" fill="none" stroke="#222" stroke-width="2.1" stroke-linecap="round"/><path d="M8.1 12.6 V18.3 M14 12.6 V18.3" stroke="#222" stroke-width="2"/></svg>
<svg class="a" style="left:2703px;top:528px" width="27" height="27" viewBox="0 0 27 27"><path d="M3 21 A2.2 2.2 0 0 1 1.2 18.8 V5.5 A4 4 0 0 1 5.2 1.5 H18 A2.6 2.6 0 0 1 20.6 3.4" fill="none" stroke="#222" stroke-width="2" stroke-linecap="round"/><rect x="5.4" y="5.1" width="19.4" height="19.4" rx="4" fill="none" stroke="#222" stroke-width="2.1"/><path d="M15.1 9.6 V19.6 M10.1 14.6 H20.1" stroke="#222" stroke-width="2"/></svg>
<svg class="a" style="left:2649px;top:592px" width="22" height="25" viewBox="0 0 22 25"><path d="M1.4 6 H20.8" stroke="#222" stroke-width="2.1"/><path d="M7.3 6 V4.6 A3.75 3.75 0 0 1 14.8 4.6 V6" fill="none" stroke="#222" stroke-width="2"/><path d="M3.5 9.5 V19.5 A4 4 0 0 0 7.5 23.5 H15.4 A4 4 0 0 0 19.4 19.5 V9.5" fill="none" stroke="#222" stroke-width="2.1" stroke-linecap="round"/><path d="M8.1 12.6 V18.3 M14 12.6 V18.3" stroke="#222" stroke-width="2"/></svg>
<svg class="a" style="left:2703px;top:592px" width="27" height="27" viewBox="0 0 27 27"><path d="M3 21 A2.2 2.2 0 0 1 1.2 18.8 V5.5 A4 4 0 0 1 5.2 1.5 H18 A2.6 2.6 0 0 1 20.6 3.4" fill="none" stroke="#222" stroke-width="2" stroke-linecap="round"/><rect x="5.4" y="5.1" width="19.4" height="19.4" rx="4" fill="none" stroke="#222" stroke-width="2.1"/><path d="M15.1 9.6 V19.6 M10.1 14.6 H20.1" stroke="#222" stroke-width="2"/></svg>
<svg class="a" style="left:2649px;top:656px" width="22" height="25" viewBox="0 0 22 25"><path d="M1.4 6 H20.8" stroke="#222" stroke-width="2.1"/><path d="M7.3 6 V4.6 A3.75 3.75 0 0 1 14.8 4.6 V6" fill="none" stroke="#222" stroke-width="2"/><path d="M3.5 9.5 V19.5 A4 4 0 0 0 7.5 23.5 H15.4 A4 4 0 0 0 19.4 19.5 V9.5" fill="none" stroke="#222" stroke-width="2.1" stroke-linecap="round"/><path d="M8.1 12.6 V18.3 M14 12.6 V18.3" stroke="#222" stroke-width="2"/></svg>
<svg class="a" style="left:2703px;top:656px" width="27" height="27" viewBox="0 0 27 27"><path d="M3 21 A2.2 2.2 0 0 1 1.2 18.8 V5.5 A4 4 0 0 1 5.2 1.5 H18 A2.6 2.6 0 0 1 20.6 3.4" fill="none" stroke="#222" stroke-width="2" stroke-linecap="round"/><rect x="5.4" y="5.1" width="19.4" height="19.4" rx="4" fill="none" stroke="#222" stroke-width="2.1"/><path d="M15.1 9.6 V19.6 M10.1 14.6 H20.1" stroke="#222" stroke-width="2"/></svg>
<svg class="a" style="left:2649px;top:720px" width="22" height="25" viewBox="0 0 22 25"><path d="M1.4 6 H20.8" stroke="#222" stroke-width="2.1"/><path d="M7.3 6 V4.6 A3.75 3.75 0 0 1 14.8 4.6 V6" fill="none" stroke="#222" stroke-width="2"/><path d="M3.5 9.5 V19.5 A4 4 0 0 0 7.5 23.5 H15.4 A4 4 0 0 0 19.4 19.5 V9.5" fill="none" stroke="#222" stroke-width="2.1" stroke-linecap="round"/><path d="M8.1 12.6 V18.3 M14 12.6 V18.3" stroke="#222" stroke-width="2"/></svg>
<svg class="a" style="left:2703px;top:720px" width="27" height="27" viewBox="0 0 27 27"><path d="M3 21 A2.2 2.2 0 0 1 1.2 18.8 V5.5 A4 4 0 0 1 5.2 1.5 H18 A2.6 2.6 0 0 1 20.6 3.4" fill="none" stroke="#222" stroke-width="2" stroke-linecap="round"/><rect x="5.4" y="5.1" width="19.4" height="19.4" rx="4" fill="none" stroke="#222" stroke-width="2.1"/><path d="M15.1 9.6 V19.6 M10.1 14.6 H20.1" stroke="#222" stroke-width="2"/></svg>
<svg class="a" style="left:2649px;top:784px" width="22" height="25" viewBox="0 0 22 25"><path d="M1.4 6 H20.8" stroke="#222" stroke-width="2.1"/><path d="M7.3 6 V4.6 A3.75 3.75 0 0 1 14.8 4.6 V6" fill="none" stroke="#222" stroke-width="2"/><path d="M3.5 9.5 V19.5 A4 4 0 0 0 7.5 23.5 H15.4 A4 4 0 0 0 19.4 19.5 V9.5" fill="none" stroke="#222" stroke-width="2.1" stroke-linecap="round"/><path d="M8.1 12.6 V18.3 M14 12.6 V18.3" stroke="#222" stroke-width="2"/></svg>
<svg class="a" style="left:2703px;top:784px" width="27" height="27" viewBox="0 0 27 27"><path d="M3 21 A2.2 2.2 0 0 1 1.2 18.8 V5.5 A4 4 0 0 1 5.2 1.5 H18 A2.6 2.6 0 0 1 20.6 3.4" fill="none" stroke="#222" stroke-width="2" stroke-linecap="round"/><rect x="5.4" y="5.1" width="19.4" height="19.4" rx="4" fill="none" stroke="#222" stroke-width="2.1"/><path d="M15.1 9.6 V19.6 M10.1 14.6 H20.1" stroke="#222" stroke-width="2"/></svg>
<svg class="a" style="left:2649px;top:848px" width="22" height="25" viewBox="0 0 22 25"><path d="M1.4 6 H20.8" stroke="#222" stroke-width="2.1"/><path d="M7.3 6 V4.6 A3.75 3.75 0 0 1 14.8 4.6 V6" fill="none" stroke="#222" stroke-width="2"/><path d="M3.5 9.5 V19.5 A4 4 0 0 0 7.5 23.5 H15.4 A4 4 0 0 0 19.4 19.5 V9.5" fill="none" stroke="#222" stroke-width="2.1" stroke-linecap="round"/><path d="M8.1 12.6 V18.3 M14 12.6 V18.3" stroke="#222" stroke-width="2"/></svg>
<svg class="a" style="left:2703px;top:848px" width="27" height="27" viewBox="0 0 27 27"><path d="M3 21 A2.2 2.2 0 0 1 1.2 18.8 V5.5 A4 4 0 0 1 5.2 1.5 H18 A2.6 2.6 0 0 1 20.6 3.4" fill="none" stroke="#222" stroke-width="2" stroke-linecap="round"/><rect x="5.4" y="5.1" width="19.4" height="19.4" rx="4" fill="none" stroke="#222" stroke-width="2.1"/><path d="M15.1 9.6 V19.6 M10.1 14.6 H20.1" stroke="#222" stroke-width="2"/></svg>
<svg class="a" style="left:2649px;top:912px" width="22" height="25" viewBox="0 0 22 25"><path d="M1.4 6 H20.8" stroke="#222" stroke-width="2.1"/><path d="M7.3 6 V4.6 A3.75 3.75 0 0 1 14.8 4.6 V6" fill="none" stroke="#222" stroke-width="2"/><path d="M3.5 9.5 V19.5 A4 4 0 0 0 7.5 23.5 H15.4 A4 4 0 0 0 19.4 19.5 V9.5" fill="none" stroke="#222" stroke-width="2.1" stroke-linecap="round"/><path d="M8.1 12.6 V18.3 M14 12.6 V18.3" stroke="#222" stroke-width="2"/></svg>
<svg class="a" style="left:2703px;top:912px" width="27" height="27" viewBox="0 0 27 27"><path d="M3 21 A2.2 2.2 0 0 1 1.2 18.8 V5.5 A4 4 0 0 1 5.2 1.5 H18 A2.6 2.6 0 0 1 20.6 3.4" fill="none" stroke="#222" stroke-width="2" stroke-linecap="round"/><rect x="5.4" y="5.1" width="19.4" height="19.4" rx="4" fill="none" stroke="#222" stroke-width="2.1"/><path d="M15.1 9.6 V19.6 M10.1 14.6 H20.1" stroke="#222" stroke-width="2"/></svg>
<svg class="a" style="left:2649px;top:976px" width="22" height="25" viewBox="0 0 22 25"><path d="M1.4 6 H20.8" stroke="#222" stroke-width="2.1"/><path d="M7.3 6 V4.6 A3.75 3.75 0 0 1 14.8 4.6 V6" fill="none" stroke="#222" stroke-width="2"/><path d="M3.5 9.5 V19.5 A4 4 0 0 0 7.5 23.5 H15.4 A4 4 0 0 0 19.4 19.5 V9.5" fill="none" stroke="#222" stroke-width="2.1" stroke-linecap="round"/><path d="M8.1 12.6 V18.3 M14 12.6 V18.3" stroke="#222" stroke-width="2"/></svg>
<svg class="a" style="left:2703px;top:976px" width="27" height="27" viewBox="0 0 27 27"><path d="M3 21 A2.2 2.2 0 0 1 1.2 18.8 V5.5 A4 4 0 0 1 5.2 1.5 H18 A2.6 2.6 0 0 1 20.6 3.4" fill="none" stroke="#222" stroke-width="2" stroke-linecap="round"/><rect x="5.4" y="5.1" width="19.4" height="19.4" rx="4" fill="none" stroke="#222" stroke-width="2.1"/><path d="M15.1 9.6 V19.6 M10.1 14.6 H20.1" stroke="#222" stroke-width="2"/></svg>
<div class="a" style="left:2742px;top:524px;width:20px;height:174px;border-radius:10px;background:#dcdcdc"></div>
<div class="a" style="left:2738px;top:1006px;width:30px;height:31px;background:#f8f8f8;border-right:2px solid #e2e2e2"></div>
<div class="a" style="left:2605px;top:1038px;width:162px;height:62px;background:#faf1e0"></div>
<div class="a" style="left:2605px;top:1100px;width:164px;height:4px;background:#dcdcdc"></div>
<div class="a" style="left:2605px;top:1104px;width:164px;height:32px;border:2px solid #e0e0e0;border-top:none;background:#fff"></div>
<div class="a" style="left:2765px;top:1030px;width:2px;height:74px;background:#dedede"></div>
<!--/TABLE-->

<!--REST-->
<!-- remarks card -->
<div class="a" style="left:250px;top:1168px;width:2558px;height:230px;background:#fff"></div>
<div class="a" style="left:424px;top:1168px;width:2px;height:140px;background:#e3e3e3"></div>

<svg class="a" style="left:317px;top:1203px" width="40" height="40" viewBox="0 0 40 40"><defs><clipPath id="bzc"><circle cx="20" cy="19.8" r="19.8"/></clipPath></defs><circle cx="20" cy="19.8" r="19.8" fill="#e5e5fb"/><g clip-path="url(#bzc)"><path d="M5.5 5 V34.5 A3 3 0 0 0 8.5 37.5 H31.5 A3 3 0 0 0 34.5 34.5 V5" fill="none" stroke="#46a9d2" stroke-width="3"/><path d="M11.6 2.5 V6 M16.4 2.5 V6 M20.7 0 V6.5 M25 2.5 V6 M29.6 2.5 V6" stroke="#46a9d2" stroke-width="2.6"/><path d="M11 10.4 H31 M11 17.4 H31 M11 24.5 H31 M11 31.6 H22" stroke="#46a9d2" stroke-width="2.8"/></g></svg>
<div class="t" style="left:289px;top:1250px;font-size:24px;color:#555">备注信息</div>
<div class="t" style="left:458px;top:1223px;font-size:24px;color:#a3a3a3">请输入备注信息</div>
<div class="a" style="left:458px;top:1263px;width:2131px;height:2px;background:#c4c4c4"></div>

<!-- footer -->
<div class="a" style="left:250px;top:1288px;width:2558px;height:18px;background:linear-gradient(to bottom,rgba(0,0,0,0),rgba(0,0,0,0.045))"></div>
<div class="a" style="left:250px;top:1306px;width:2558px;height:3px;background:#e0e1e4"></div>
<div class="a" style="left:250px;top:1309px;width:2590px;height:89px;background:linear-gradient(to bottom,#fff 0,#fff 40%,#f1f1f2 100%);box-shadow:0 0 7px rgba(0,0,0,0.10)"></div>
<div class="a" style="left:2128px;top:1319px;width:140px;height:71px;border:2px solid #8f8f8f;border-radius:6px;background:#fff"></div>
<div class="t" style="left:2165px;top:1340px;font-size:32px;color:#222">放弃</div>
<div class="a" style="left:2288px;top:1319px;width:204px;height:71px;border:2px solid #5563f0;border-radius:6px;background:#fff"></div>
<div class="t" style="left:2326px;top:1340px;font-size:32px;color:#5563f0">保存草稿</div>
<div class="a" style="left:2512px;top:1319px;width:284px;height:71px;border-radius:6px;background:#5561f2"></div>
<div class="t" style="left:2606px;top:1340px;font-size:32px;color:#fff">保存</div>
<svg class="a" style="left:2672px;top:1346px" width="30" height="18" viewBox="0 0 30 18"><path d="M2 16 L15 3 L28 16" fill="none" stroke="#fff" stroke-width="3"/></svg>

<!-- page scrollbar -->
<div class="a" style="left:2848px;top:130px;width:20px;height:1178px;background:#fff"></div>
<div class="a" style="left:2854px;top:136px;width:14px;height:1130px;border-radius:7px 0 0 7px;background:#dcdcdc"></div>

<!-- right widgets -->
<div class="a" style="left:2839px;top:268px;width:79px;height:79px;border-radius:50%;background:#e8eefa;border:2px solid #fff;box-shadow:0 0 10px rgba(0,0,0,0.12);overflow:hidden">
  <div class="a" style="left:12px;top:10px;width:60px;height:56px;border-radius:45%;background:#f1f4fc"></div>
  <div class="a" style="left:7px;top:21px;width:5px;height:13px;border-radius:50%;background:#3a57d6"></div>
  <div class="a" style="left:15px;top:25px;width:40px;height:28px;border-radius:9px;background:#0d1a63;border:2px solid #3d6fe0"></div>
  <div class="a" style="left:23px;top:34px;width:12px;height:12px;border-radius:3px;background:#49c8f7"></div>
  <div class="a" style="left:9px;top:56px;width:22px;height:10px;border-radius:50%;background:#d9e2f7"></div>
</div>
<div class="a" style="left:2810px;top:470px;width:58px;height:72px;background:#fff;box-shadow:0 0 6px rgba(0,0,0,0.08)"></div>
<svg class="a" style="left:2828px;top:488px" width="40" height="38" viewBox="0 0 40 38"><path d="M30 36 H6 A4 4 0 0 1 2 32 V6 A4 4 0 0 1 6 2 H32 A4 4 0 0 1 36 6 V30 Z M30 36 V30 H36" fill="none" stroke="#333" stroke-width="2.2" stroke-linejoin="round"/><text x="19" y="26" font-size="22" text-anchor="middle" fill="#333" font-family="Liberation Sans,sans-serif">草</text></svg>
<div class="a" style="left:2810px;top:550px;width:58px;height:72px;background:#fff;box-shadow:0 0 6px rgba(0,0,0,0.08)"></div>
<svg class="a" style="left:2826px;top:567px" width="41" height="41" viewBox="0 0 24 24"><path d="M21.44 11.05l-9.19 9.19a6 6 0 0 1-8.49-8.49l9.19-9.19a4 4 0 0 1 5.66 5.66l-9.2 9.19a2 2 0 0 1-2.83-2.83l8.49-8.48" fill="none" stroke="#333" stroke-width="1.45" stroke-linecap="round" stroke-linejoin="round"/></svg>
<div class="a" style="left:2810px;top:630px;width:58px;height:72px;background:#5561f2"></div>
<svg class="a" style="left:2826px;top:648px" width="42" height="38" viewBox="0 0 42 38"><rect x="2" y="2" width="38" height="34" rx="5" fill="none" stroke="#fff" stroke-width="2.4"/><path d="M24 8 H33 V17 M33 8 L24 17 M18 21 L9 30 M9 21 V30 H18" fill="none" stroke="#fff" stroke-width="2.4"/></svg>

<!-- logo & icons -->
<svg class="a" style="left:26px;top:4px" width="48" height="41" viewBox="0 0 48 41"><defs><linearGradient id="lg" x1="0" y1="0" x2="1" y2="1"><stop offset="0" stop-color="#ffffff"/><stop offset="1" stop-color="#e2e2e2"/></linearGradient></defs><path id="lf" d="M12.5 1 C14.8 1.5 16.3 4.5 15.3 7 C14 9.5 10.7 12.5 10.7 17.5 C10.7 23 16 27 21 31.5 C23.5 34 23.5 38 21.5 39.3 C20 40 18.5 39 16 36.8 L5 27 C0 22.5 0 14 4.5 9.5 Z" fill="url(#lg)"/><g transform="translate(47.8 0) scale(-1 1)"><path d="M12.5 1 C14.8 1.5 16.3 4.5 15.3 7 C14 9.5 10.7 12.5 10.7 17.5 C10.7 23 16 27 21 31.5 C23.5 34 23.5 38 21.5 39.3 C20 40 18.5 39 16 36.8 L5 27 C0 22.5 0 14 4.5 9.5 Z" fill="url(#lg)"/></g><ellipse cx="24.1" cy="16.7" rx="7.6" ry="7.3" fill="url(#lg)"/><circle cx="24.1" cy="16.7" r="2.3" fill="#1b2454"/></svg>
<svg class="a" style="left:26px;top:112px" width="34" height="34" viewBox="0 0 34 34"><circle cx="14" cy="14" r="10" fill="none" stroke="#fff" stroke-width="4.2"/><path d="M25.5 25.5 L29 29" stroke="#fff" stroke-width="4" stroke-linecap="round"/></svg>
<svg class="a" style="left:101px;top:1347px" width="29" height="29" viewBox="0 0 24 24"><path d="M9.19 4.19 L9.60 1.26 L14.40 1.26 L14.81 4.19 L17.36 5.66 L20.10 4.55 L22.50 8.71 L20.17 10.53 L20.17 13.47 L22.50 15.29 L20.10 19.45 L17.36 18.34 L14.81 19.81 L14.40 22.74 L9.60 22.74 L9.19 19.81 L6.64 18.34 L3.90 19.45 L1.50 15.29 L3.83 13.47 L3.83 10.53 L1.50 8.71 L3.90 4.55 L6.64 5.66 Z" fill="#fff" stroke="#fff" stroke-width="1.2" stroke-linejoin="round"/><circle cx="12" cy="12" r="3.5" fill="#1b2552"/></svg>
<!--/REST-->
</body></html>
